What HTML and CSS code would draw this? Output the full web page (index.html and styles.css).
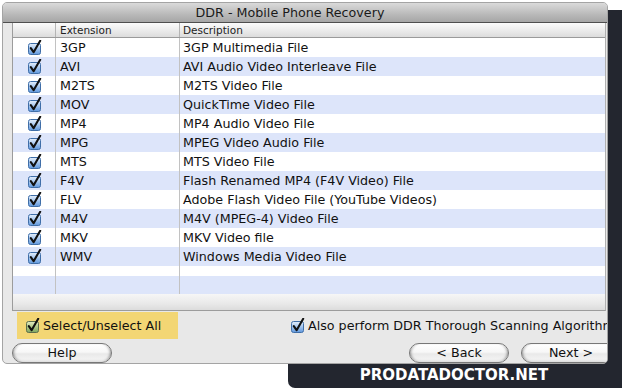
FILE: index.html
```html
<!DOCTYPE html>
<html>
<head>
<meta charset="utf-8">
<title>DDR - Mobile Phone Recovery</title>
<link rel="stylesheet" href="styles.css">
</head>
<body>
<div class="stage">
  <div class="backdrop"><span class="brand">PRODATADOCTOR.NET</span></div>
  <div class="window">
    <div class="titlebar">DDR - Mobile Phone Recovery</div>
    <div class="content">
      <div class="table">
        <div class="row head"><div class="c1"></div><div class="c2">Extension</div><div class="c3">Description</div></div>
        <div class="row"><div class="c1"><svg class="cb" viewBox="0 0 15 15"><use href="#chk"/></svg></div><div class="c2">3GP</div><div class="c3">3GP Multimedia File</div></div>
        <div class="row alt"><div class="c1"><svg class="cb" viewBox="0 0 15 15"><use href="#chk"/></svg></div><div class="c2">AVI</div><div class="c3">AVI Audio Video Interleave File</div></div>
        <div class="row"><div class="c1"><svg class="cb" viewBox="0 0 15 15"><use href="#chk"/></svg></div><div class="c2">M2TS</div><div class="c3">M2TS Video File</div></div>
        <div class="row alt"><div class="c1"><svg class="cb" viewBox="0 0 15 15"><use href="#chk"/></svg></div><div class="c2">MOV</div><div class="c3">QuickTime Video File</div></div>
        <div class="row"><div class="c1"><svg class="cb" viewBox="0 0 15 15"><use href="#chk"/></svg></div><div class="c2">MP4</div><div class="c3">MP4 Audio Video File</div></div>
        <div class="row alt"><div class="c1"><svg class="cb" viewBox="0 0 15 15"><use href="#chk"/></svg></div><div class="c2">MPG</div><div class="c3">MPEG Video Audio File</div></div>
        <div class="row"><div class="c1"><svg class="cb" viewBox="0 0 15 15"><use href="#chk"/></svg></div><div class="c2">MTS</div><div class="c3">MTS Video File</div></div>
        <div class="row alt"><div class="c1"><svg class="cb" viewBox="0 0 15 15"><use href="#chk"/></svg></div><div class="c2">F4V</div><div class="c3">Flash Renamed MP4 (F4V Video) File</div></div>
        <div class="row"><div class="c1"><svg class="cb" viewBox="0 0 15 15"><use href="#chk"/></svg></div><div class="c2">FLV</div><div class="c3">Adobe Flash Video File (YouTube Videos)</div></div>
        <div class="row alt"><div class="c1"><svg class="cb" viewBox="0 0 15 15"><use href="#chk"/></svg></div><div class="c2">M4V</div><div class="c3">M4V (MPEG-4) Video File</div></div>
        <div class="row"><div class="c1"><svg class="cb" viewBox="0 0 15 15"><use href="#chk"/></svg></div><div class="c2">MKV</div><div class="c3">MKV Video file</div></div>
        <div class="row alt"><div class="c1"><svg class="cb" viewBox="0 0 15 15"><use href="#chk"/></svg></div><div class="c2">WMV</div><div class="c3">Windows Media Video File</div></div>
        <div class="row filler-short"><div class="c1"></div><div class="c2"></div><div class="c3"></div></div>
        <div class="row alt filler-tall"><div class="c1"></div><div class="c2"></div><div class="c3"></div></div>
        <div class="shade"></div>
      </div>
      <div class="options">
        <label class="select-all"><svg class="cb" viewBox="0 0 15 15"><use href="#chkgreen"/></svg><span>Select/Unselect All</span></label>
        <label class="thorough"><svg class="cb" viewBox="0 0 15 15"><use href="#chk"/></svg><span>Also perform DDR Thorough Scanning Algorithm</span></label>
      </div>
      <div class="buttons">
        <div class="btn">Help</div>
        <div class="btn back">&lt; Back</div>
        <div class="btn next">Next &gt;</div>
      </div>
    </div>
  </div>
</div>
<svg class="defs" width="0" height="0">
  <defs>
    <linearGradient id="gblue" x1="0" y1="0" x2="0" y2="1">
      <stop offset="0" stop-color="#e6f0fc"/>
      <stop offset="0.45" stop-color="#a9c9f0"/>
      <stop offset="1" stop-color="#5f97dc"/>
    </linearGradient>
    <linearGradient id="ggreen" x1="0" y1="0" x2="0" y2="1">
      <stop offset="0" stop-color="#e4ecc4"/>
      <stop offset="0.45" stop-color="#b4cc8c"/>
      <stop offset="1" stop-color="#7ea45e"/>
    </linearGradient>
    <g id="chk">
      <rect x="1.5" y="3.5" width="12" height="11" rx="2" fill="url(#gblue)" stroke="#3f6ea8"/>
      <path d="M3.8 8.2 L6.6 12.2 L13.2 0.8" fill="none" stroke="#111" stroke-width="2.1" stroke-linecap="round" stroke-linejoin="round"/>
    </g>
    <g id="chkgreen">
      <rect x="1.5" y="3.5" width="12" height="11" rx="2" fill="url(#ggreen)" stroke="#5c6e4c"/>
      <path d="M3.8 8.2 L6.6 12.2 L13.2 0.8" fill="none" stroke="#111" stroke-width="2.1" stroke-linecap="round" stroke-linejoin="round"/>
    </g>
  </defs>
</svg>
</body>
</html>
```

FILE: styles.css
```css
* { box-sizing: border-box; }
html, body { margin: 0; padding: 0; background: #fff; }
body { font-family: "DejaVu Sans", "Liberation Sans", sans-serif; color: #111; }

.defs { position: absolute; width: 0; height: 0; overflow: hidden; }

.stage {
  position: relative;
  width: 622px;
  height: 388px;
  overflow: hidden;
  background: #fff;
}

.backdrop {
  position: absolute;
  left: 288px;
  top: 10px;
  right: 0;
  bottom: 0;
  background: #23262f;
  border-radius: 0 0 0 7px;
  display: flex;
  align-items: flex-end;
  justify-content: center;
  padding: 0 0 4px 0;
}

.brand {
  font-family: "DejaVu Sans", sans-serif;
  font-weight: 700;
  font-size: 15px;
  line-height: 18px;
  color: #fff;
  letter-spacing: 0;
  margin-left: -2px;
}

.window {
  position: absolute;
  left: 2px;
  top: 2px;
  width: 606px;
  height: 362px;
  border: 1px solid #a4a4a4;
  border-radius: 5px;
  background: #e8e8e8;
  overflow: hidden;
  display: flex;
  flex-direction: column;
}

.titlebar {
  height: 20px;
  flex-shrink: 0;
  background: linear-gradient(#dadada, #b9b9b9 60%, #a6a6a6);
  border-bottom: 1px solid #4e4e4e;
  font-size: 12.7px;
  line-height: 19px;
  text-align: center;
  padding-right: 30px;
  color: #1a1a1a;
}

.content {
  flex: 1;
  display: flex;
  flex-direction: column;
  padding-left: 9px;
}

.table {
  width: 594px;
  height: 288px;
  flex-shrink: 0;
  background: #fff;
  border-left: 1px solid #9c9c9c;
  border-right: 1px solid #b0b0b0;
  border-bottom: 1px solid #9c9c9c;
  display: flex;
  flex-direction: column;
}

.row {
  display: grid;
  grid-template-columns: 43px 124px 1fr;
  height: 19px;
  flex-shrink: 0;
  font-size: 12.7px;
  line-height: 19px;
  white-space: nowrap;
}

.row.alt { background: #dde5fa; }

.c1 {
  border-right: 1px solid #c2c2c2;
  display: flex;
  align-items: center;
  justify-content: center;
}
.c2 {
  border-right: 1px solid #c2c2c2;
  padding-left: 4px;
}
.c3 { padding-left: 3px; overflow: hidden; }

.row.head {
  height: 15px;
  font-size: 10.5px;
  line-height: 14px;
  background: linear-gradient(#fbfbfb, #ececec 50%, #dcdcdc);
  border-bottom: 1px solid #9a9a9a;
  color: #222;
}
.row.head .c1, .row.head .c2 { border-right-color: #b4b4b4; }

.row.filler-short { height: 10px; }
.row.filler-tall { height: 18px; }

.shade {
  flex: 1;
  background: linear-gradient(#f6f6f6, #e9e9e9 60%, #dcdcdc);
}

.cb { width: 15px; height: 15px; flex-shrink: 0; display: block; }

.options {
  height: 27px;
  margin-top: 1px;
  display: flex;
  align-items: stretch;
  flex-shrink: 0;
  font-size: 12.7px;
  white-space: nowrap;
}

.select-all {
  margin-left: 5px;
  width: 161px;
  flex-shrink: 0;
  background: #f3d674;
  display: flex;
  align-items: center;
  gap: 3px;
  padding-left: 8px;
}

.thorough {
  margin-left: 112px;
  display: flex;
  align-items: center;
  gap: 3px;
  flex-shrink: 0;
}

.buttons {
  margin-top: 4px;
  height: 20px;
  display: flex;
  flex-shrink: 0;
}

.btn {
  width: 100px;
  height: 20px;
  flex-shrink: 0;
  border: 1px solid #777;
  border-radius: 10px;
  background: linear-gradient(#ffffff, #f7f7f7 45%, #e9e9e9 55%, #f6f6f6);
  box-shadow: inset 3px 0 3px -2px rgba(0,0,0,0.35), inset -3px 0 3px -2px rgba(0,0,0,0.35), inset 0 -2px 2px rgba(0,0,0,0.06);
  font-size: 12.7px;
  line-height: 18px;
  text-align: center;
  color: #111;
}

.btn.back { margin-left: 297px; }
.btn.next { margin-left: 12px; }
```
